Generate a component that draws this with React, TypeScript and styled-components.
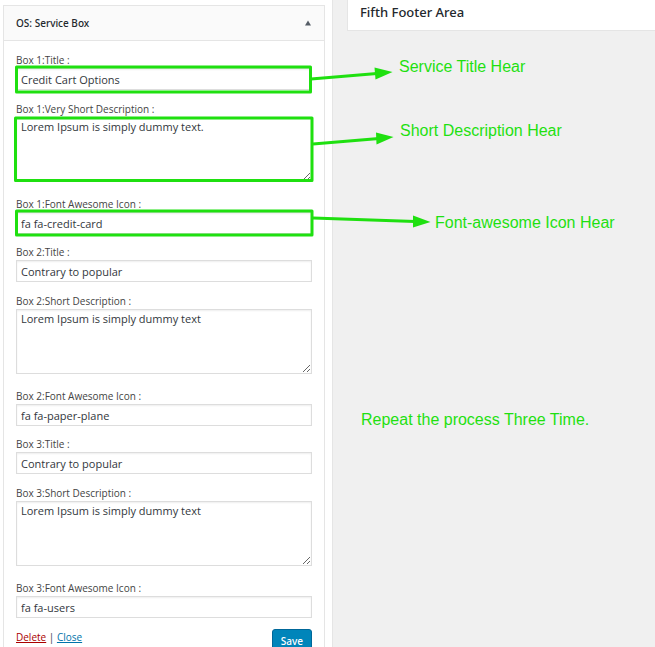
import React, { useId } from "react";
import styled, { createGlobalStyle, css } from "styled-components";

const GREEN = "#1fe010";
const HEADING_FONT = `"Noto Sans", "Open Sans", sans-serif`;

const GlobalStyle = createGlobalStyle`
  *, *::before, *::after { box-sizing: border-box; }
  body {
    margin: 0;
    background: #f0f0f0;
    color: #32373c;
    font-family: "Open Sans", "Noto Sans", sans-serif;
    font-size: 11px;
  }
`;

const Page = styled.main`
  position: relative;
  display: grid;
  grid-template-columns: 333px minmax(0, 1fr);
  height: 100vh;
  overflow: hidden;
`;

const Sidebar = styled.section`
  padding: 5px 7px 0 3px;
  background: #fff;
  border-right: 1px solid #e5e5e5;
`;

const Widget = styled.article`
  border: 1px solid #e5e5e5;
  background: #fff;
`;

const WidgetHeader = styled.header`
  display: flex;
  align-items: center;
  justify-content: space-between;
  height: 35px;
  padding: 0 12px;
  background: #fafafa;
  border-bottom: 1px solid #e5e5e5;
`;

const WidgetTitle = styled.h3`
  margin: 0;
  font-family: ${HEADING_FONT};
  font-size: 10px;
  font-weight: 500;
  color: #23282d;
`;

const Toggle = styled.button`
  display: flex;
  padding: 0;
  border: 0;
  background: none;
  color: #555d66;
`;

const Form = styled.form`
  padding: 12px;
`;

const Field = styled.div<{ $gap: number }>`
  display: flex;
  flex-direction: column;
  margin-bottom: ${(p) => p.$gap}px;
`;

const Label = styled.label`
  padding-bottom: 1px;
  font-size: 10px;
  line-height: 14px;
  color: #444;
`;

const control = css`
  display: block;
  width: 100%;
  margin: 0;
  border: 1px solid #ddd;
  border-radius: 0;
  background: #fff;
  box-shadow: inset 0 1px 2px rgba(0, 0, 0, 0.07);
  color: #32373c;
  font-family: inherit;
  font-size: 11px;
  outline: none;
`;

const TextInput = styled.input`
  ${control}
  height: 22px;
  padding: 0 4px;
`;

const TextArea = styled.textarea`
  ${control}
  height: 65px;
  padding: 1px 4px;
  line-height: 16px;
  resize: vertical;
`;

const Actions = styled.footer`
  display: flex;
  justify-content: space-between;
  align-items: flex-start;
`;

const Links = styled.div`
  line-height: 16px;
  font-size: 10px;
`;

const ActionLink = styled.a<{ $danger?: boolean }>`
  color: ${(p) => (p.$danger ? "#a00" : "#0073aa")};
`;

const SaveButton = styled.button`
  height: 24px;
  padding: 0 8px;
  border: 1px solid #006799;
  border-radius: 3px;
  background: #0085ba;
  color: #fff;
  font-family: ${HEADING_FONT};
  font-size: 10px;
  font-weight: 500;
`;

const Content = styled.section`
  padding-left: 14px;
`;

const AreaPanel = styled.header`
  height: 31px;
  padding: 3px 12px 0;
  border: 1px solid #e5e5e5;
  border-width: 0 0 1px 1px;
  background: #fff;
`;

const AreaTitle = styled.h2`
  margin: 0;
  font-family: ${HEADING_FONT};
  font-size: 13px;
  line-height: 18px;
  font-weight: 500;
  color: #23282d;
`;

const Markup = styled.svg`
  position: absolute;
  top: 0;
  left: 0;
  pointer-events: none;
`;

const Note = styled.p<{ $x: number; $y: number }>`
  position: absolute;
  left: ${(p) => p.$x}px;
  top: ${(p) => p.$y}px;
  margin: 0;
  color: ${GREEN};
  font-family: "Liberation Sans", Arial, sans-serif;
  font-size: 16px;
  line-height: 18px;
  white-space: nowrap;
`;

type FieldData = { label: string; value: string; gap: number; multiline?: boolean };

const fields: FieldData[] = [
  { label: "Box 1:Title :", value: "Credit Cart Options", gap: 12 },
  { label: "Box 1:Very Short Description :", value: "Lorem Ipsum is simply dummy text.", gap: 15, multiline: true },
  { label: "Box 1:Font Awesome Icon :", value: "fa fa-credit-card", gap: 11 },
  { label: "Box 2:Title :", value: "Contrary to popular", gap: 12 },
  { label: "Box 2:Short Description :", value: "Lorem Ipsum is simply dummy text", gap: 15, multiline: true },
  { label: "Box 2:Font Awesome Icon :", value: "fa fa-paper-plane", gap: 11 },
  { label: "Box 3:Title :", value: "Contrary to popular", gap: 12 },
  { label: "Box 3:Short Description :", value: "Lorem Ipsum is simply dummy text", gap: 15, multiline: true },
  { label: "Box 3:Font Awesome Icon :", value: "fa fa-users", gap: 11 },
];

const notes = [
  { text: "Service Title Hear", x: 399, y: 58 },
  { text: "Short Description Hear", x: 400, y: 122 },
  { text: "Font-awesome Icon Hear", x: 435, y: 214 },
  { text: "Repeat the process Three Time.", x: 361, y: 411 },
];

function FormField({ label, value, gap, multiline }: FieldData) {
  const id = useId();
  return (
    <Field $gap={gap}>
      <Label htmlFor={id}>{label}</Label>
      {multiline ? (
        <TextArea id={id} defaultValue={value} spellCheck={false} />
      ) : (
        <TextInput id={id} type="text" defaultValue={value} />
      )}
    </Field>
  );
}

export default function App() {
  return (
    <>
      <GlobalStyle />
      <Page>
        <Sidebar>
          <Widget>
            <WidgetHeader>
              <WidgetTitle>OS: Service Box</WidgetTitle>
              <Toggle type="button" aria-label="Collapse widget">
                <svg width="8" height="6" viewBox="0 0 8 6" aria-hidden="true">
                  <path d="M4 0.5 7 5.5H1Z" fill="currentColor" />
                </svg>
              </Toggle>
            </WidgetHeader>
            <Form onSubmit={(e) => e.preventDefault()}>
              {fields.map((f) => (
                <FormField key={f.label} {...f} />
              ))}
              <Actions>
                <Links>
                  <ActionLink href="#delete" $danger>Delete</ActionLink>
                  {" | "}
                  <ActionLink href="#close">Close</ActionLink>
                </Links>
                <SaveButton type="submit">Save</SaveButton>
              </Actions>
            </Form>
          </Widget>
        </Sidebar>
        <Content>
          <AreaPanel>
            <AreaTitle>Fifth Footer Area</AreaTitle>
          </AreaPanel>
        </Content>
        <Markup width="655" height="260" viewBox="0 0 655 260" aria-hidden="true">
          <g fill="none" stroke={GREEN} strokeWidth="3" strokeLinejoin="round">
            <path d="M16.5 67H310.5V92H16.5Z" />
            <path d="M15.5 118H312V180.5H15.5Z" />
            <path d="M16.5 211H312V235H16.5Z" />
            <path d="M311 79 377 73.5M313 144 379 138.5M313 218 415 221.5" />
          </g>
          <g fill={GREEN}>
            <path d="M374.5 67.5 392.5 72 375.5 79.5Z" />
            <path d="M376 132.5 393.5 137 376.5 144.5Z" />
            <path d="M413 215.5 430.5 222 413 227.5Z" />
          </g>
        </Markup>
        {notes.map((n) => (
          <Note key={n.text} $x={n.x} $y={n.y}>{n.text}</Note>
        ))}
      </Page>
    </>
  );
}
